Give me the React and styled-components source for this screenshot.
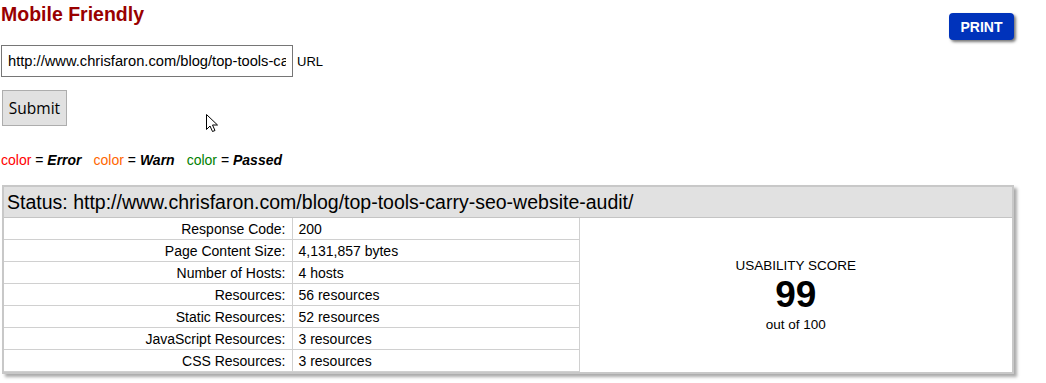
import React from "react";
import styled, { createGlobalStyle } from "styled-components";

const GlobalStyle = createGlobalStyle`
  body {
    margin: 0;
    background: #fff;
    font-family: "Liberation Sans", Arial, sans-serif;
    color: #000;
  }
`;

const Page = styled.div`
  position: relative;
  width: 1046px;
  height: 383px;
  overflow: hidden;
`;

const TopBar = styled.div`
  display: flex;
  justify-content: space-between;
  align-items: flex-start;
  padding: 0 32px 0 1px;
  height: 45px;
`;

const Title = styled.h1`
  margin: 0;
  padding-top: 3px;
  font-size: 19.5px;
  line-height: 22px;
  font-weight: bold;
  color: #990000;
`;

const PrintButton = styled.button`
  margin-top: 13px;
  width: 65px;
  height: 27px;
  border: none;
  border-radius: 4px;
  background: #0033bb;
  color: #fff;
  font-family: "Liberation Sans", Arial, sans-serif;
  font-size: 14px;
  font-weight: bold;
  box-shadow: 2px 2px 3px #777;
  cursor: pointer;
`;

const UrlRow = styled.div`
  display: flex;
  align-items: center;
  gap: 4px;
  padding-left: 1px;
`;

const UrlInput = styled.input`
  box-sizing: border-box;
  width: 292px;
  height: 32px;
  padding: 0 6px;
  border: 1px solid #767676;
  font-family: "Liberation Sans", Arial, sans-serif;
  font-size: 14.7px;
  color: #000;
  outline: none;
`;

const Label = styled.span`
  font-size: 13px;
`;

const SubmitButton = styled.button`
  display: block;
  box-sizing: border-box;
  margin: 13px 0 0 2px;
  width: 65px;
  height: 36px;
  background: #e1e1e1;
  border: 1px solid #adadad;
  font-family: "Open Sans", "Liberation Sans", sans-serif;
  font-size: 15.5px;
  color: #000;
  padding: 0;
`;

const Legend = styled.div`
  display: flex;
  gap: 12px;
  margin-top: 26px;
  padding-left: 1px;
  font-size: 14px;
  line-height: 16px;
`;

const LegendItem = styled.span`
  white-space: pre;
`;

const Swatch = styled.span`
  color: ${(p) => p.$color};
`;

const Strong = styled.b`
  font-style: italic;
`;

const Panel = styled.div`
  margin: 17px 0 0 2px;
  width: 1008px;
  border: 2px solid #c8c8c8;
  box-shadow: 3px 3px 3px #aaa;
`;

const Table = styled.table`
  width: 100%;
  border-collapse: collapse;
  table-layout: fixed;
`;

const HeadCell = styled.th`
  height: 30px;
  padding: 0 3px;
  background: #e1e1e1;
  border-bottom: 1px solid #c4c4c4;
  text-align: left;
  font-weight: normal;
  font-size: 19.5px;
`;

const Cell = styled.td`
  height: 21px;
  padding: 0 6px;
  border: 1px solid #d0d0d0;
  font-size: 14px;
  line-height: 16px;
  text-align: ${(p) => (p.$right ? "right" : "left")};
  &:first-child {
    border-left: none;
  }
`;

const ScoreCell = styled.td`
  border-left: 1px solid #d0d0d0;
  text-align: center;
  vertical-align: middle;
  padding-top: 2px;
`;

const ScoreLabel = styled.div`
  font-size: 13.5px;
`;

const ScoreValue = styled.div`
  font-size: 37px;
  line-height: 44px;
  font-weight: bold;
`;

const Cursor = styled.svg`
  position: absolute;
  left: 206px;
  top: 114px;
`;

const rows = [
  ["Response Code:", "200"],
  ["Page Content Size:", "4,131,857 bytes"],
  ["Number of Hosts:", "4 hosts"],
  ["Resources:", "56 resources"],
  ["Static Resources:", "52 resources"],
  ["JavaScript Resources:", "3 resources"],
  ["CSS Resources:", "3 resources"],
];

const url = "http://www.chrisfaron.com/blog/top-tools-carry-seo-website-audit/";

export default function App() {
  return (
    <Page>
      <GlobalStyle />
      <TopBar>
        <Title>Mobile Friendly</Title>
        <PrintButton>PRINT</PrintButton>
      </TopBar>
      <UrlRow>
        <UrlInput defaultValue={url} />
        <Label>URL</Label>
      </UrlRow>
      <SubmitButton>Submit</SubmitButton>
      <Legend>
        <LegendItem>
          <Swatch $color="#ff0000">color</Swatch> = <Strong>Error</Strong>
        </LegendItem>
        <LegendItem>
          <Swatch $color="#ff6600">color</Swatch> = <Strong>Warn</Strong>
        </LegendItem>
        <LegendItem>
          <Swatch $color="#008000">color</Swatch> = <Strong>Passed</Strong>
        </LegendItem>
      </Legend>
      <Panel>
        <Table>
          <colgroup>
            <col style={{ width: 288 }} />
            <col style={{ width: 287 }} />
            <col />
          </colgroup>
          <thead>
            <tr>
              <HeadCell colSpan={3}>Status: {url}</HeadCell>
            </tr>
          </thead>
          <tbody>
            {rows.map(([k, v], i) => (
              <tr key={k}>
                <Cell $right>{k}</Cell>
                <Cell>{v}</Cell>
                {i === 0 && (
                  <ScoreCell rowSpan={rows.length}>
                    <ScoreLabel>USABILITY SCORE</ScoreLabel>
                    <ScoreValue>99</ScoreValue>
                    <ScoreLabel>out of 100</ScoreLabel>
                  </ScoreCell>
                )}
              </tr>
            ))}
          </tbody>
        </Table>
      </Panel>
      <Cursor width="13" height="19" viewBox="0 0 13 19">
        <path
          d="M0.5 0.5 L0.5 15.5 L4 12 L6.5 17.5 L9 16.5 L6.5 11 L11.5 11 Z"
          fill="#fff"
          stroke="#000"
          strokeWidth="1"
          strokeLinejoin="miter"
        />
      </Cursor>
    </Page>
  );
}
